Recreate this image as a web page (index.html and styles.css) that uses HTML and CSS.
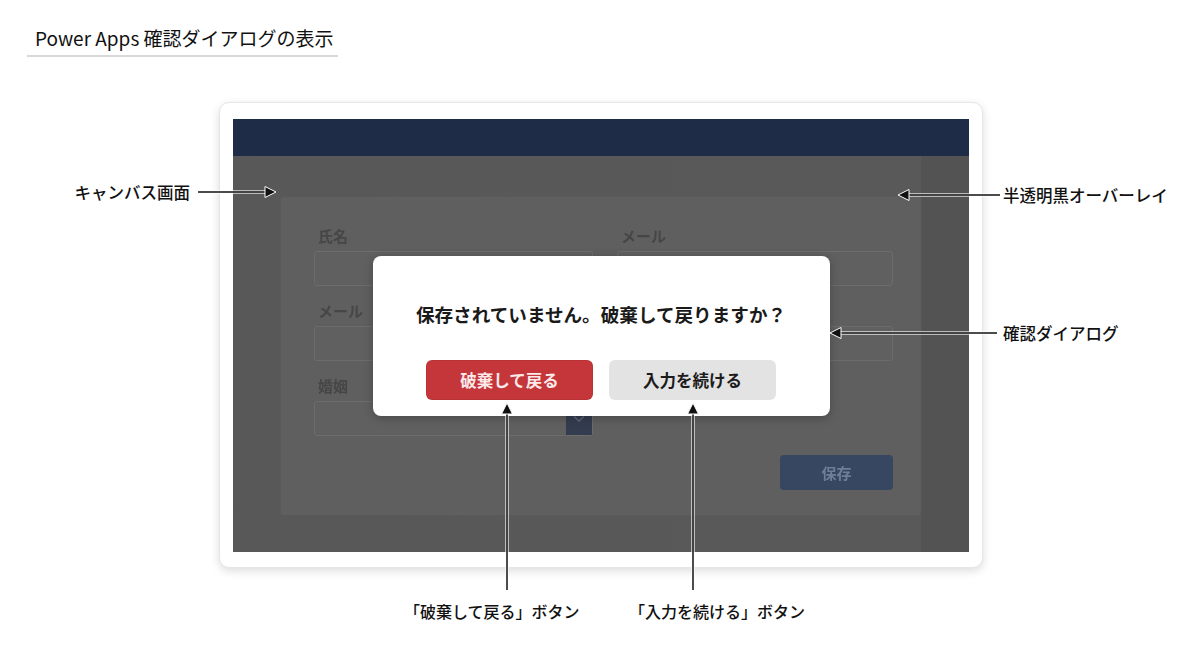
FILE: index.html
```html
<!DOCTYPE html>
<html lang="ja">
<head>
  <meta charset="UTF-8">
  <meta name="viewport" content="width=device-width, initial-scale=1.0">
  <title>Power Apps 確認ダイアログの表示</title>
  <link rel="stylesheet" href="styles.css">
</head>
<body>
  <div class="page">
    <h1 class="title">Power Apps 確認ダイアログの表示</h1>

    <div class="frame">
      <div class="screen">
        <div class="app-header"></div>
        <div class="app-body">
          <div class="form-card">
            <div class="form-grid">
              <div class="field">
                <div class="field-label">氏名</div>
                <div class="field-input"></div>
              </div>
              <div class="field">
                <div class="field-label">メール</div>
                <div class="field-input"></div>
              </div>
              <div class="field">
                <div class="field-label">メール</div>
                <div class="field-input"></div>
              </div>
              <div class="field">
                <div class="field-label"></div>
                <div class="field-input"></div>
              </div>
              <div class="field">
                <div class="field-label">婚姻</div>
                <div class="field-input select">
                  <span class="select-btn">
                    <svg width="12" height="8" viewBox="0 0 12 8"><path d="M1 1.5 L6 6 L11 1.5" fill="none" stroke="#5d6678" stroke-width="1.6"/></svg>
                  </span>
                </div>
              </div>
            </div>
            <div class="form-actions">
              <div class="save-btn">保存</div>
            </div>
          </div>
        </div>

        <!-- overlay + dialog -->
        <div class="overlay">
          <div class="dialog">
            <p class="dialog-text">保存されていません。破棄して戻りますか？</p>
            <div class="dialog-buttons">
              <div class="btn btn-danger">破棄して戻る</div>
              <div class="btn btn-neutral">入力を続ける</div>
            </div>
          </div>
        </div>
      </div>
    </div>

    <div class="note note-canvas">キャンバス画面</div>
    <div class="note note-overlay">半透明黒オーバーレイ</div>
    <div class="note note-dialog">確認ダイアログ</div>
    <div class="note note-discard">「破棄して戻る」ボタン</div>
    <div class="note note-continue">「入力を続ける」ボタン</div>

    <svg class="arrows" width="1200" height="669" viewBox="0 0 1200 669">
      <g stroke="#fff" stroke-width="3.5" fill="none" opacity="0.8">
        <line x1="198" y1="192" x2="268" y2="192"/>
        <line x1="1000" y1="195" x2="906" y2="195"/>
        <line x1="997" y1="333" x2="838" y2="333"/>
        <line x1="507" y1="590" x2="507" y2="411"/>
        <line x1="693" y1="590" x2="693" y2="411"/>
      </g>
      <g stroke="#111" stroke-width="1.5" fill="none">
        <line x1="198" y1="192" x2="268" y2="192"/>
        <line x1="1000" y1="195" x2="906" y2="195"/>
        <line x1="997" y1="333" x2="838" y2="333"/>
        <line x1="507" y1="590" x2="507" y2="411"/>
        <line x1="693" y1="590" x2="693" y2="411"/>
      </g>
      <g fill="#111" stroke="#fff" stroke-width="1" stroke-linejoin="round">
        <path d="M276 192 L265 186.5 L265 197.5 Z"/>
        <path d="M898 195 L909 189.5 L909 200.5 Z"/>
        <path d="M830 333 L841 327.5 L841 338.5 Z"/>
        <path d="M507 403 L501.5 414 L512.5 414 Z"/>
        <path d="M693 403 L687.5 414 L698.5 414 Z"/>
      </g>
    </svg>
  </div>
</body>
</html>
```

FILE: styles.css
```css
body {
  margin: 0;
  background: #fff;
  font-family: "Noto Sans CJK JP", "Noto Sans", sans-serif;
  color: #111;
}

.page {
  position: relative;
  width: 1200px;
  height: 669px;
  overflow: hidden;
}

.title {
  margin: 25px 0 0 27px;
  width: 295px;
  padding: 0 8px 4px 8px;
  font-size: 19px;
  font-weight: 400;
  line-height: 26px;
  border-bottom: 2px solid #d8d8d8;
  white-space: nowrap;
}

/* white card around the app */
.frame {
  margin: 45px 0 0 219px;
  width: 736px;
  padding: 16px 13px 15px 13px;
  background: #fff;
  border: 1px solid #e6e6e6;
  border-radius: 10px;
  box-shadow: 0 3px 10px rgba(0, 0, 0, 0.14);
}

.screen {
  position: relative;
  height: 433px;
  background: #575757;
  overflow: hidden;
}

.app-header {
  height: 37px;
  background: #1f2c48;
}

.app-body {
  padding: 41px 48px 37px 48px;
  background: linear-gradient(to right, #585858 0, #595959 688px, #535353 688px);
}

.form-card {
  height: 318px;
  box-sizing: border-box;
  padding: 29px 28px 0 33px;
  background: #5f5f5f;
  border-radius: 4px;
  box-shadow: 0 0 2px rgba(255, 255, 255, 0.06);
  filter: blur(0.6px);
}

.form-grid {
  display: grid;
  grid-template-columns: 279px 276px;
  column-gap: 24px;
  row-gap: 15px;
}

.field-label {
  height: 20px;
  line-height: 20px;
  margin-bottom: 5px;
  padding-left: 4px;
  font-size: 15px;
  font-weight: 700;
  color: #464646;
}

.field-input {
  position: relative;
  height: 35px;
  box-sizing: border-box;
  background: #606060;
  border: 1px solid #6c6c6c;
  border-radius: 3px;
}

.select-btn {
  position: absolute;
  right: 0;
  top: 0;
  bottom: 0;
  width: 26px;
  background: #343d4f;
  display: flex;
  align-items: center;
  justify-content: center;
}

.form-actions {
  display: flex;
  justify-content: flex-end;
  margin-top: 19px;
}

.save-btn {
  width: 113px;
  height: 35px;
  line-height: 35px;
  text-align: center;
  background: #374761;
  border-radius: 4px;
  font-size: 15px;
  font-weight: 700;
  color: #6f7d96;
}

.overlay {
  position: absolute;
  inset: 0;
  display: flex;
  align-items: center;
  justify-content: center;
}

.dialog {
  width: 457px;
  height: 160px;
  box-sizing: border-box;
  padding-top: 46px;
  background: #fff;
  border-radius: 8px;
  box-shadow: 0 2px 10px rgba(0, 0, 0, 0.25);
  text-align: center;
}

.dialog-text {
  margin: 0;
  font-size: 18.6px;
  line-height: 24px;
  font-weight: 700;
  color: #1a1a1a;
}

.dialog-buttons {
  display: flex;
  justify-content: center;
  gap: 16px;
  margin-top: 34px;
}

.btn {
  width: 167px;
  height: 40px;
  line-height: 40px;
  border-radius: 6px;
  font-size: 16.5px;
  font-weight: 700;
}

.btn-danger {
  background: #c5363a;
  color: #fbeaea;
  box-shadow: inset 0 0 0 1px rgba(0, 0, 0, 0.06);
}

.btn-neutral {
  background: #e3e3e3;
  color: #1c1c1c;
}

/* annotation labels */
.note {
  position: absolute;
  font-size: 16.5px;
  line-height: 24px;
  font-weight: 500;
  color: #111;
  white-space: nowrap;
}

.note-canvas { top: 180px; right: 1010px; }
.note-overlay { top: 183px; left: 1003px; }
.note-dialog { top: 321px; left: 1003px; }
.note-discard { top: 599px; left: 404px; font-size: 16px; }
.note-continue { top: 599px; left: 629px; font-size: 16px; }

.arrows {
  position: absolute;
  left: 0;
  top: 0;
  pointer-events: none;
}
```
